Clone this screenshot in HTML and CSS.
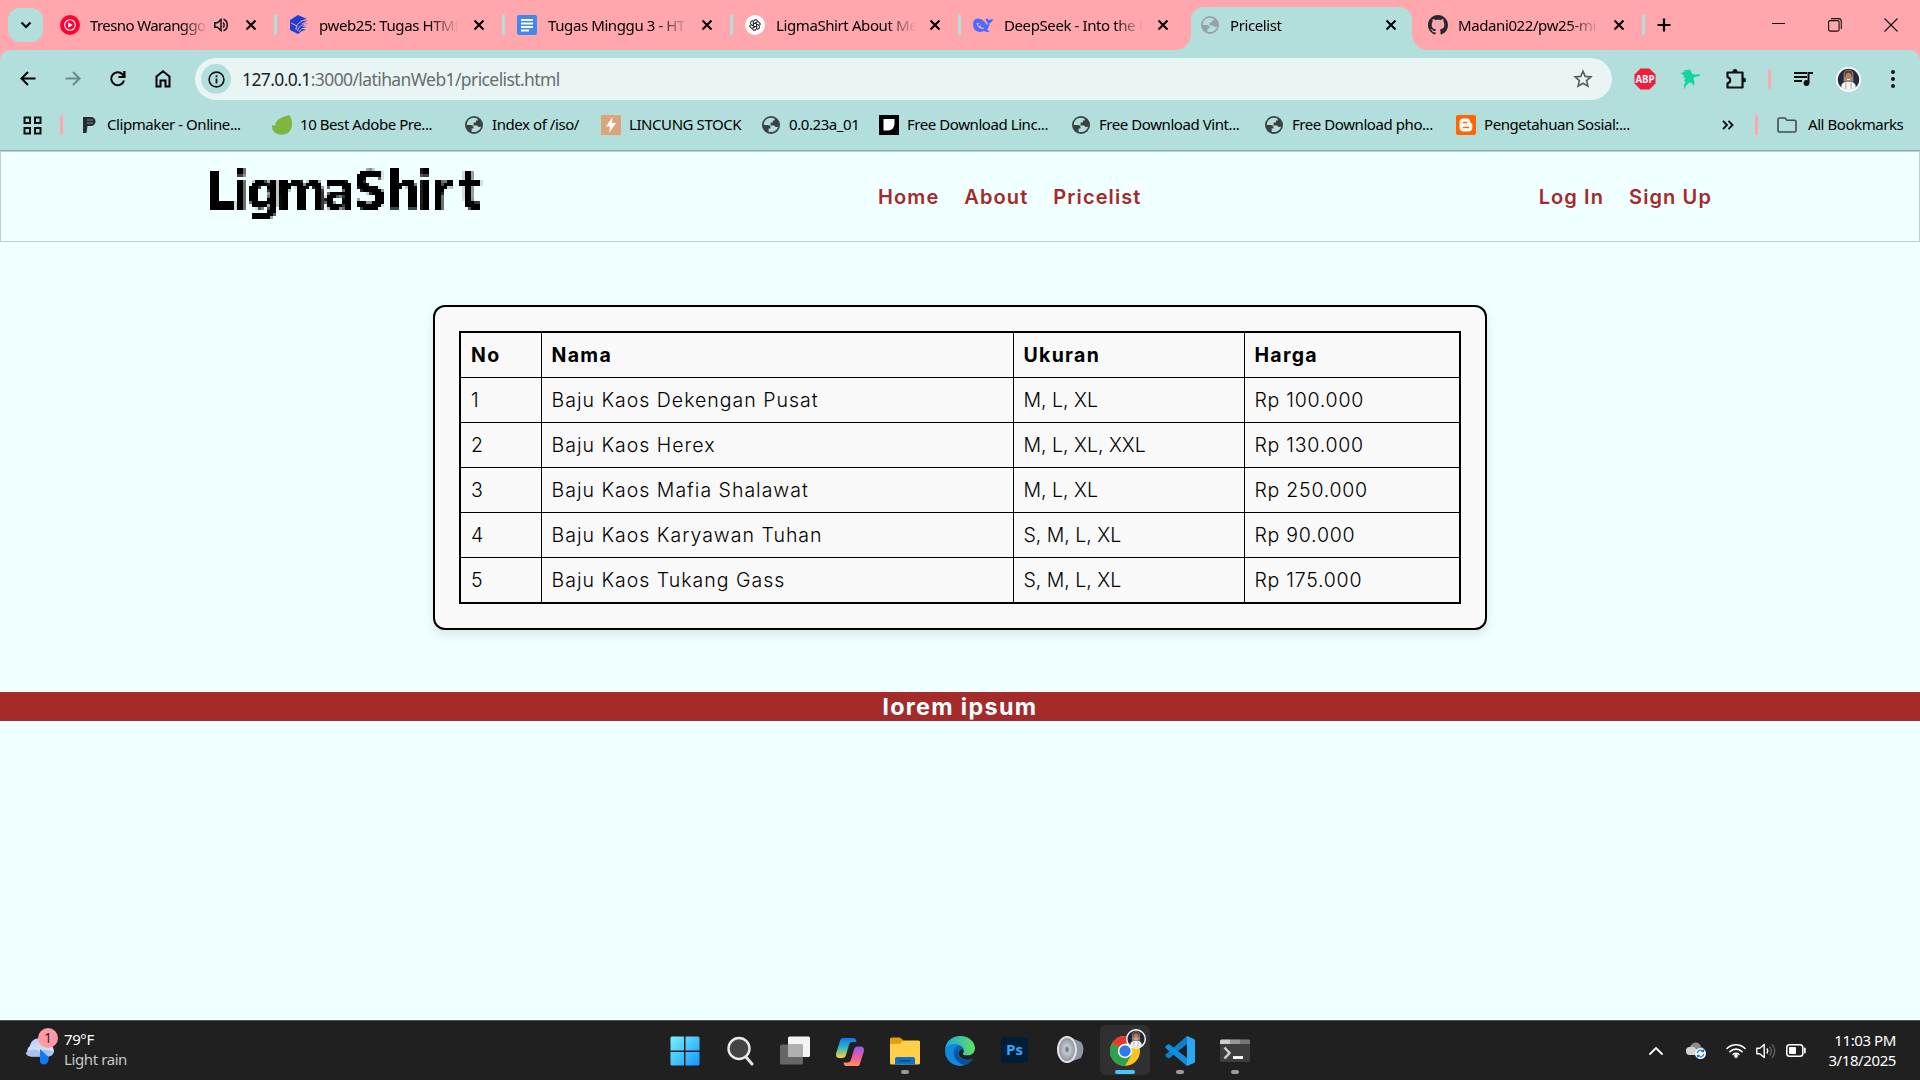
FILE: index.html
```html
<!DOCTYPE html>
<html lang="en">
<head>
<meta charset="utf-8">
<title>Pricelist</title>
<link rel="stylesheet" href="styles.css">
</head>
<body>
<svg class="defs" width="0" height="0">
  <defs>
    <symbol id="close" viewBox="0 0 12 12"><path d="M1.5 1.5l9 9M10.5 1.5l-9 9" stroke="#000" stroke-width="2" fill="none"/></symbol>
    <symbol id="globe" viewBox="0 0 18 18"><circle cx="9" cy="9" r="9" fill="currentColor"/><path class="land" d="M8.5 1.8C4.5 2 1.800 5 1.800 9l4 .1c1.600 0 2.700.8 2.700 2.300v1.100H6.600v3.200c4.200 1.300 8.800-1.300 9.500-5.300-1.500 1-3.300.7-3.800-.9H8.600V6.400h2.300V4.600h1.800V2.700C11.300 2 9.900 1.800 8.500 1.800z"/></symbol>
    <symbol id="avatar" viewBox="0 0 24 24"><circle cx="12" cy="12" r="12" fill="#fff"/><circle cx="12" cy="12" r="10.300" fill="#242b38"/><path d="M5 19.500c0-4 3-5.500 7-5.500s7 1.500 7 5.500c-3.500 4-10.500 4-14 0z" fill="#f4f4f4"/><path d="M7.500 6c1-4.500 8-4.500 9 0l.3 8H7.200z" fill="#8b8f96"/><path d="M8.500 5.500c1-3 6-3 7 0l.3 4H8.200z" fill="#5b3a2d"/><ellipse cx="12" cy="9.800" rx="3" ry="4.400" fill="#bc7d5d"/><path d="M10.500 11.500h3v1h-3z" fill="#fff"/><path d="M9.500 15v6M14.500 15v6" stroke="#888" stroke-width=".7"/></symbol>
    <filter id="mosaic" filterUnits="userSpaceOnUse" x="-6" y="-3" width="285" height="63">
      <feFlood x="-5" y="-2" width="1" height="1" flood-color="#000"/>
      <feComposite x="-6" y="-3" width="3" height="3" operator="over" in2="SourceGraphic" result="dot"/>
      <feFlood x="-5" y="-2" width="1" height="1" flood-color="#000" result="f"/>
      <feOffset in="f" x="-6" y="-3" width="3" height="3"/>
      <feTile/>
      <feComposite in="SourceGraphic" in2="" operator="in" result="a"/>
      <feMorphology in="a" operator="dilate" radius="1"/>
    </filter>
  </defs>
</svg>

<div class="window">
<div class="tabstrip">
  <div class="tabsearch"><svg width="12" height="8" viewBox="0 0 12 8"><path d="M1.500 1.500L6 6l4.500-4.500" fill="none" stroke="#000" stroke-width="2.200"/></svg></div>
  <div class="tabs">
    <div class="tab short">
      <svg class="fav" viewBox="0 0 20 20"><circle cx="10" cy="10" r="10" fill="#ff0033"/><circle cx="10" cy="10" r="5.300" fill="none" stroke="#fff" stroke-width="1.100"/><path d="M8.200 7.300v5.400l4.500-2.700z" fill="#fff"/></svg>
      <span class="title">Tresno Waranggo</span>
      <svg class="sound" width="15" height="14" viewBox="0 0 15 14"><path d="M.8 4.700h2.700L7 1.500v11L3.500 9.300H.8z" fill="none" stroke="#111" stroke-width="1.500"/><path d="M9 4.500c1.500 1 1.500 4 0 5M9.500 1.300c5 1.500 5 9.900 0 11.400" fill="none" stroke="#111" stroke-width="1.500"/></svg>
      <svg class="x"><use href="#close"/></svg>
    </div>
    <div class="tab">
      <svg class="fav" viewBox="0 0 20 20"><path d="M9 0l9 4-7 2 8-.5-7 3.500 7-.5-6 3 5 .5-5.500 1.500 4.500 1.500-4 1-4 3L1 15V5z" fill="#1d3fd8"/><path d="M7 15c0-6 4-9 11-10.500M8.500 16c1-5 4-6.500 10-6.800M10 17c2-3.500 4-4 7-3.500M2 8l6 3" fill="none" stroke="#ffa7ad" stroke-width="1"/></svg>
      <span class="title">pweb25: Tugas HTML</span><svg class="x"><use href="#close"/></svg>
    </div>
    <div class="tab">
      <svg class="fav" viewBox="0 0 20 20"><rect width="20" height="20" rx="2" fill="#4285f4"/><path d="M4 5h12M4 8.500h12M4 12h12M4 15.500h8" stroke="#fff" stroke-width="1.900"/></svg>
      <span class="title">Tugas Minggu 3 - HT</span><svg class="x"><use href="#close"/></svg>
    </div>
    <div class="tab">
      <svg class="fav" viewBox="0 0 20 20"><circle cx="10" cy="10" r="10" fill="#fff"/><g fill="none" stroke="#222" stroke-width="1"><g transform="translate(2 2) scale(.8)"><path id="petal" d="M8 11.200V6.300c0-3 4-3.700 5.200-1.200M8 8.800l4.300-2.500c2.600-1.500 5.100 1.600 3.600 3.900"/><use href="#petal" transform="rotate(60 10 10)"/><use href="#petal" transform="rotate(120 10 10)"/><use href="#petal" transform="rotate(180 10 10)"/><use href="#petal" transform="rotate(240 10 10)"/><use href="#petal" transform="rotate(300 10 10)"/></g></g></svg>
      <span class="title">LigmaShirt About Me</span><svg class="x"><use href="#close"/></svg>
    </div>
    <div class="tab last">
      <svg class="fav" viewBox="0 0 20 20"><path d="M1.500 5C3.500 2.800 6 3.200 8 4.200c1.500.4 1.500 1 2.500 1.800 2 1.500 2.500 3 4 4 .8-1.300.2-2-1-3.500-1-1.500-.8-2.500 0-3.500 1 .3 1.500 1.700 2.500 2 1-.2 2.500-1.200 4-1-.3 2.500-1.500 3.500-3.300 4-.2 3-1.200 5-2.700 6.500l2.500 2c-2 1.200-4 .2-5.500-.5C4 19 0 14.500 0 9.500 0 7.500.5 6 1.500 5z" fill="#4d6bfe"/><path d="M3.500 8c3.500-.5 6.500 3 7.500 6-4 .5-7-2.500-7.500-6z" fill="#ffa7ad"/><path d="M5 9.500c2.500 0 4 1.500 5 3" fill="none" stroke="#4d6bfe" stroke-width="1.500"/></svg>
      <span class="title">DeepSeek - Into the U</span><svg class="x"><use href="#close"/></svg>
    </div>
    <div class="tab active">
      <svg class="fav globe"><use href="#globe"/></svg>
      <span class="title">Pricelist</span><svg class="x"><use href="#close"/></svg>
    </div>
    <div class="tab">
      <svg class="fav" viewBox="0 0 16 16"><path fill="#24292f" d="M8 0C3.580 0 0 3.580 0 8c0 3.540 2.290 6.530 5.470 7.590.4.070.55-.17.55-.38 0-.19-.01-.82-.01-1.490-2.010.37-2.530-.49-2.690-.94-.09-.23-.48-.94-.82-1.130-.28-.15-.68-.52-.01-.53.63-.01 1.080.58 1.230.82.72 1.210 1.870.87 2.330.66.07-.52.28-.87.51-1.070-1.780-.2-3.640-.89-3.640-3.950 0-.87.31-1.590.82-2.150-.08-.2-.36-1.020.08-2.120 0 0 .67-.21 2.200.82.640-.18 1.320-.27 2-.27s1.360.09 2 .27c1.530-1.040 2.200-.82 2.200-.82.440 1.100.160 1.920.080 2.120.510.560.820 1.270.820 2.150 0 3.070-1.870 3.750-3.650 3.950.290.250.540.730.540 1.480 0 1.070-.01 1.930-.01 2.200 0 .21.150.460.550.380A8 8 0 0016 8c0-4.420-3.580-8-8-8z"/></svg>
      <span class="title">Madani022/pw25-mi</span><svg class="x"><use href="#close"/></svg>
    </div>
  </div>
  <svg class="plus" width="14" height="14" viewBox="0 0 14 14"><path d="M7 .5v13M.5 7h13" stroke="#000" stroke-width="2.200"/></svg>
  <div class="winctl">
    <svg width="14" height="14" viewBox="0 0 14 14"><path d="M0 5.500h13" stroke="#111"/></svg>
    <svg width="14" height="14" viewBox="0 0 14 14"><rect x=".6" y="2.600" width="10.500" height="10.500" rx="1.500" fill="none" stroke="#111" stroke-width="1.100"/><path d="M3 .6h7.500a2.800 2.800 0 0 1 2.800 2.800V11" fill="none" stroke="#111" stroke-width="1.100"/></svg>
    <svg width="14" height="14" viewBox="0 0 14 14"><path d="M.5.5l13 13M13.500.5l-13 13" stroke="#111" stroke-width="1.100"/></svg>
  </div>
</div>

<div class="chrome">
  <div class="toolbar">
    <div class="navbtns">
      <svg width="20" height="20" viewBox="0 0 20 20"><path d="M17.500 9.500H4M10 3L3.500 9.500 10 16" fill="none" stroke="#000" stroke-width="2"/></svg>
      <svg width="20" height="20" viewBox="0 0 20 20"><path d="M2.500 9.500H16M10 3l6.500 6.500L10 16" fill="none" stroke="#6d8a8a" stroke-width="2"/></svg>
      <svg width="20" height="20" viewBox="0 0 20 20"><path d="M16 11.500a6.500 6.500 0 1 1-1.600-6.300L17 8" fill="none" stroke="#000" stroke-width="2"/><path d="M17.500 2v7h-7V7h4.700V2z" fill="#000"/></svg>
      <svg width="20" height="20" viewBox="0 0 20 20"><path d="M3.500 7.500L10 2.300l6.500 5.200v10h-4v-6h-5v6h-4z" fill="none" stroke="#000" stroke-width="2"/></svg>
    </div>
    <div class="omnibox">
      <div class="info"><svg width="17" height="17" viewBox="0 0 17 17"><circle cx="8.500" cy="8.500" r="7.400" fill="none" stroke="#111" stroke-width="1.600"/><path d="M8.500 7.500v5M8.500 4.300v1.900" stroke="#111" stroke-width="1.800"/></svg></div>
      <span class="url"><b>127.0.0.1</b>:3000/latihanWeb1/pricelist.html</span>
      <svg width="20" height="20" viewBox="0 0 20 20"><path d="M10 2.200l2.200 5.200 5.700.5-4.300 3.700 1.300 5.500L10 14.200l-4.900 2.900 1.300-5.500L2.100 7.900l5.700-.5z" fill="none" stroke="#555e5e" stroke-width="1.600"/></svg>
    </div>
    <div class="exts">
      <svg width="22" height="22" viewBox="0 0 22 22"><path d="M6.500.5h9l6 6v9l-6 6h-9l-6-6v-9z" fill="#f01e3c"/><text x="11" y="14.800" text-anchor="middle" class="abp" textLength="19" lengthAdjust="spacingAndGlyphs">ABP</text></svg>
      <svg width="20" height="20" viewBox="0 0 20 20"><path d="M0 3.500L3 4 2.500 2.500 5 3 4 1l4 .3L9.500 0l2 3 .5 2 3.500.7L18 5l2 .5-.5 1.500L15 8l-1.500 1c0 2 1 3.500 1 5l-1 3-1.500-3-2.500-.5-3.500 3L5 20.500l-1.300-4.200L5.500 13 4 11.500 5.500 9 3 8.500 4.500 7z" fill="#10d6a0"/></svg>
      <svg width="22" height="22" viewBox="0 0 22 22"><path d="M2.500 4.500h15v15h-15v-4.200c3.600-.8 3.600-5.400 0-6.200z" fill="none" stroke="#111" stroke-width="2.200" stroke-linejoin="round"/><path d="M7.500 4a2.500 3 0 0 1 5 0zM18 9.500a3 2.500 0 0 1 0 5z" fill="#111"/></svg>
      <i class="vsep"></i>
      <svg width="20" height="16" viewBox="0 0 20 16"><path d="M0 2h13M0 6h13M0 10h8" stroke="#111" stroke-width="1.900"/><path d="M14.500 12V2H19" stroke="#111" stroke-width="2" fill="none"/><circle cx="12.500" cy="12" r="2.900" fill="#111"/></svg>
      <svg width="25" height="25"><use href="#avatar"/></svg>
      <svg width="6" height="20" viewBox="0 0 6 20"><g fill="#111"><circle cx="3" cy="3" r="2"/><circle cx="3" cy="10" r="2"/><circle cx="3" cy="17" r="2"/></g></svg>
    </div>
  </div>
  <div class="bookmarks">
    <svg class="apps" width="19" height="19" viewBox="0 0 19 19"><g fill="none" stroke="#111" stroke-width="2"><path d="M1.500 1.500h5.500v5.500H1.500zM12 1.500h5.500v5.500H12zM1.500 12h5.500v5.500H1.500zM12 12h5.500v5.500H12z"/></g></svg>
    <i class="vsep"></i>
    <div class="bm b1"><svg viewBox="0 0 20 20"><path d="M4 2h8a4.500 4.500 0 0 1 0 9H8.500l-1 7H4z" fill="#262b2c"/><path d="M8 5h6M8 8h6" stroke="#789" stroke-width="1"/></svg><span>Clipmaker - Online...</span></div>
    <div class="bm b2"><svg viewBox="0 0 20 20"><path d="M17 0c3.500 3 5 13-1 18C9 22 0 18.500 0 11.500 0 10 1.500 9.500 3 11 3.500 3.500 11 2 17 0z" fill="#82b440"/></svg><span>10 Best Adobe Pre...</span></div>
    <div class="bm b3"><svg class="g"><use href="#globe"/></svg><span>Index of /iso/</span></div>
    <div class="bm b4"><svg viewBox="0 0 20 20"><path d="M0 0h20v20H0z" fill="#dba57b"/><path d="M11.500 2L5 11.500h4L8 18l7-10h-4z" fill="#fff"/></svg><span>LINCUNG STOCK</span></div>
    <div class="bm b5"><svg class="g"><use href="#globe"/></svg><span>0.0.23a_01</span></div>
    <div class="bm b6"><svg viewBox="0 0 20 20"><path d="M0 0h20v20H0z"/><path d="M4.500 4h11v4c0 5-3 7.500-7 7.500h-4z" fill="#fff"/></svg><span>Free Download Linc...</span></div>
    <div class="bm b7"><svg class="g"><use href="#globe"/></svg><span>Free Download Vint...</span></div>
    <div class="bm b8"><svg class="g"><use href="#globe"/></svg><span>Free Download pho...</span></div>
    <div class="bm b9"><svg viewBox="0 0 20 20"><rect width="20" height="20" rx="2" fill="#ff6500"/><path d="M7.500 3.500h3.500c2 0 3.300 1.500 3.300 3.500 0 1.300.5 1.500 2 1.700v3.800c0 2.500-1.500 4-4 4H7.500c-2.500 0-4-1.500-4-4v-5c0-2.500 1.500-4 4-4z" fill="#fff"/><path d="M7.500 7.500h3M7.500 12.500h5" stroke="#ff6500" stroke-width="1.700" stroke-linecap="round"/></svg><span>Pengetahuan Sosial:...</span></div>
    <svg class="more" width="12" height="10" viewBox="0 0 12 10"><path d="M1 .8L5 5 1 9.200M6.500.8l4 4.200-4 4.200" fill="none" stroke="#111" stroke-width="1.900"/></svg>
    <i class="vsep"></i>
    <svg class="folder" width="20" height="16" viewBox="0 0 20 16"><path d="M1 2.500C1 1.500 1.500 1 2.500 1H8l2 2.200h7.500c1 0 1.500.5 1.500 1.500v8.800c0 1-.5 1.500-1.500 1.500h-15C1.500 15 1 14.500 1 13.500z" fill="none" stroke="#444c4c" stroke-width="1.600"/></svg>
    <span>All Bookmarks</span>
  </div>
</div>
</div>

<header class="site">
  <svg class="logo" width="274" height="60" viewBox="0 0 274 60" role="img">
    <defs>
      <filter id="pixels" filterUnits="userSpaceOnUse" x="-6" y="-3" width="285" height="63">
        <feFlood x="-5" y="-2" width="1" height="1" flood-color="#000"/>
        <feOffset x="-6" y="-3" width="3" height="3"/>
        <feTile result="grid"/>
        <feComposite in="SourceGraphic" in2="grid" operator="in"/>
        <feMorphology operator="dilate" radius="1"/>
      </filter>
    </defs>
    <text y="41" filter="url(#pixels)" x="-4.500 22 36.500 66 113 143 176 207 220 249">LigmaShirt</text>
  </svg>
  <nav class="menu"><a>Home</a><a>About</a><a>Pricelist</a></nav>
  <nav class="account"><a>Log In</a><a>Sign Up</a></nav>
</header>

<main>
  <div class="card">
    <table>
      <colgroup><col class="c1"><col class="c2"><col class="c3"><col class="c4"></colgroup>
      <tr><th>No</th><th>Nama</th><th>Ukuran</th><th>Harga</th></tr>
      <tr><td>1</td><td>Baju Kaos Dekengan Pusat</td><td>M, L, XL</td><td>Rp 100.000</td></tr>
      <tr><td>2</td><td>Baju Kaos Herex</td><td>M, L, XL, XXL</td><td>Rp 130.000</td></tr>
      <tr><td>3</td><td>Baju Kaos Mafia Shalawat</td><td>M, L, XL</td><td>Rp 250.000</td></tr>
      <tr><td>4</td><td>Baju Kaos Karyawan Tuhan</td><td>S, M, L, XL</td><td>Rp 90.000</td></tr>
      <tr><td>5</td><td>Baju Kaos Tukang Gass</td><td>S, M, L, XL</td><td>Rp 175.000</td></tr>
    </table>
  </div>
</main>
<footer>lorem ipsum</footer>

<div class="taskbar">
  <div class="weather">
    <svg width="36" height="40" viewBox="0 0 36 40"><defs><linearGradient id="cl" x2="0" y2="1"><stop stop-color="#b9d0f5"/><stop offset="1" stop-color="#dfe9fa"/></linearGradient></defs><path d="M7 28.500a6 6 0 0 1-1-10.500c1-9 14-11 17-2 8 0 10 12 1 12.500z" fill="url(#cl)"/><path d="M1.500 25c5-5 12-4 14-1.500 4-3 10-2 14 .5-1 3.500-4 4.500-6 4.500H7c-3 0-4-1-5.500-3.500z" fill="#a9c3f0"/><path d="M16 21l8 7.500c2 3-.5 8-4 8s-4.500-3-4-5z" fill="#0f7bf2"/><circle cx="24" cy="10" r="10" fill="#ff99a4"/><text x="24" y="15" text-anchor="middle" class="badge">1</text></svg>
    <div class="wtext"><span>79°F</span><span class="dim">Light rain</span></div>
  </div>
  <div class="apps-row">
    <div class="app"><svg viewBox="0 0 30 30"><defs><linearGradient id="w" x2="1" y2="1"><stop stop-color="#7df0ff"/><stop offset="1" stop-color="#1097ff"/></linearGradient></defs><path d="M2 .5h12v14H.5V2Q.5.5 2 .5zM15.500.5H28q1.500 0 1.500 1.500v12.500h-14zM.5 16H14v13.500H2Q.5 29.500.5 28zM15.500 16h14v12q0 1.500-1.500 1.500H15.500z" fill="url(#w)"/></svg></div>
    <div class="app"><svg viewBox="0 0 30 30"><circle cx="14" cy="12.500" r="10.500" fill="#444" stroke="#e8eaec" stroke-width="2.400"/><path d="M21 21l6 7" stroke="#e0e3e6" stroke-width="3" stroke-linecap="round"/></svg></div>
    <div class="app"><svg viewBox="0 0 30 30"><rect x="8" y=".5" width="22" height="20.500" rx="1.500" fill="#f4f4f4"/><rect x="0" y="8.500" width="23" height="20" rx="1.500" fill="#666"/><path d="M8 8.500h15V21H8z" fill="#b0b0b0"/></svg></div>
    <div class="app"><svg viewBox="0 0 30 30"><defs><linearGradient id="ca" x2="0" y2="1"><stop stop-color="#1d6ff2"/><stop offset=".45" stop-color="#25b6c8"/><stop offset="1" stop-color="#ffd23c"/></linearGradient><linearGradient id="cb" x2="0" y2="1"><stop stop-color="#8d5cf6"/><stop offset=".55" stop-color="#f25b9a"/><stop offset="1" stop-color="#ff9a55"/></linearGradient></defs><path d="M8 2h10c2.500 0 3 2 3.500 4h-4c-2 0-3 1-3.500 3l-3 10c-.7 2-1.500 3-4 3H4C1 22 .5 19 1.500 16L5 5c.6-2 1.500-3 3-3z" fill="url(#ca)"/><path d="M22 30.500H12c-2.500 0-3-2-3.500-4h4c2 0 3-1 3.500-3l3-10c.7-2 1.500-3 4-3h3c3 0 3.500 3 2.500 6L25 27.500c-.6 2-1.500 3-3 3z" fill="url(#cb)"/></svg></div>
    <div class="app run"><svg viewBox="0 0 30 30"><path d="M0 3q0-1.500 1.500-1.500H10L13 4v6H0z" fill="#e0a009"/><path d="M0 8l10-.2L13 4.500h15.500Q30 4.500 30 6v21q0 1.500-1.500 1.500h-27Q0 28.500 0 27z" fill="#ffcf48"/><path d="M5 28.500V23q0-2 2-2h16q2 0 2 2v5.500z" fill="#0f72c8"/><path d="M9.500 24.800h11" stroke="#064b8a" stroke-width="1.500"/></svg></div>
    <div class="app"><svg viewBox="0 0 30 30"><defs><linearGradient id="ed" x2="1"><stop stop-color="#1aa9e8"/><stop offset="1" stop-color="#62e05a"/></linearGradient></defs><circle cx="15" cy="15" r="15" fill="#0c63b8"/><path d="M.3 13C1 5 7.500 0 15 0c8.500 0 15 5.500 15 12.500 0 4.500-3.500 7-7.500 7-3 0-5-.8-4.800-2 .1-.7 1-1.300 1-3.500C18.700 8 5 6 .3 13z" fill="url(#ed)"/><path d="M.3 13C3 8 10 7 14 9c-5 1.500-7 7-4.500 12 2 4 6 7 10.500 8A15 15 0 0 1 .3 13z" fill="#1488d8"/><path d="M13.500 12c-4 5 1 13 8 12.500 3 0 5-1.500 6-2-1.500 3-4 5-7 6.500C11 28 7 18 13.500 12z" fill="#0a4f9c"/><path d="M17.700 17.500c-.2 1.200 1.800 2 4.800 2 4.500 0 7.500-3 7.500-7l.5 8-2.800 2c-7 3-13 0-14-5 0-2 1.500-4 3.500-4.500 1.500 1 2.200 3 .5 4.500z" fill="#202020"/></svg></div>
    <div class="app"><svg viewBox="0 0 30 30"><rect x="1" y="1" width="27" height="26" rx="4" fill="#001e36"/><text x="14.500" y="19" text-anchor="middle" class="ps">Ps</text></svg></div>
    <div class="app"><svg viewBox="0 0 30 30"><defs><radialGradient id="sp"><stop stop-color="#555d66"/><stop offset=".35" stop-color="#c4cad2"/><stop offset="1" stop-color="#8e959f"/></radialGradient></defs><path d="M12 0l14 6q5 6 0 16l-14 5z" fill="#8f97a5"/><ellipse cx="12" cy="13.500" rx="10" ry="13.500" fill="#e3e6ea"/><ellipse cx="12" cy="13.500" rx="8" ry="11.500" fill="url(#sp)"/></svg></div>
    <div class="app run current"><svg viewBox="0 0 30 30"><circle cx="15" cy="15" r="15" fill="#fcc31e"/><path d="M15 15L2 7.500A15 15 0 0 1 28 7.500H15z" fill="#e33b2e"/><path d="M2 7.500A15 15 0 0 0 15 30l6.500-11.200L15 15z" fill="#2da14c"/><circle cx="15" cy="15" r="7.200" fill="#fff"/><circle cx="15" cy="15" r="5.700" fill="#2f7bea"/></svg><svg class="mini"><use href="#avatar"/></svg></div>
    <div class="app run"><svg viewBox="0 0 30 30"><path d="M22 0l7 3q1 .5 1 1.500v21q0 1-1 1.500l-7 3z" fill="#2aa7f2"/><path d="M22 0v8L4 22.500l-3.500-2v-2z" fill="#0f7fcb"/><path d="M22 30v-8L4 8 .5 10v2z" fill="#138ddb"/></svg></div>
    <div class="app run"><svg viewBox="0 0 30 30"><rect y="3.500" width="30" height="22.500" rx="1.500" fill="#3e3e3e"/><path d="M0 8V5q0-1.500 1.500-1.500H10V8z" fill="#ccc"/><path d="M10 3.500h10V8H10z" fill="#999"/><path d="M20 3.500h8.500Q30 3.500 30 5v3H20z" fill="#777"/><path d="M4.500 11.500l5 5.500-5 5.500" fill="none" stroke="#ccc" stroke-width="2.600"/><path d="M13 21.500h10" stroke="#fff" stroke-width="2.800"/></svg></div>
  </div>
  <div class="tray">
    <svg width="14" height="8" viewBox="0 0 14 8"><path d="M1 7l6-6 6 6" fill="none" stroke="#fff" stroke-width="1.800" stroke-linecap="round"/></svg>
    <svg width="20" height="17" viewBox="0 0 20 17"><path d="M4 13a4 4 0 0 1 0-8c2-6 10-6 11 0 4 0 5 7 1 8z" fill="#8c8c8c"/><path d="M4 13a4 4 0 0 1 0-8c5-1 7 2 8 8z" fill="#d2d2d2"/><circle cx="14.500" cy="11.500" r="5.500" fill="#fff"/><path d="M11.300 11a3.300 3.300 0 0 1 6-1.500M17.700 12a3.300 3.300 0 0 1-6 1.500M17.500 7.500v2.200h-2.200M11.500 15.500v-2.200h2.200" fill="none" stroke="#1177d1" stroke-width="1.300"/></svg>
    <svg width="20" height="15" viewBox="0 0 20 15"><g fill="none" stroke="#fff" stroke-width="1.600" stroke-linecap="round"><path d="M1 5.500a12.700 12.700 0 0 1 18 0M4 8.600a8.500 8.500 0 0 1 12 0M7 11.500a4.300 4.300 0 0 1 6 0"/></g><circle cx="10" cy="13" r="1.900" fill="#fff"/></svg>
    <svg width="20" height="16" viewBox="0 0 20 16"><path d="M.8 5.200h3L8.200 1.500v13L3.800 10.800h-3z" fill="none" stroke="#fff" stroke-width="1.400" stroke-linejoin="round"/><path d="M10.800 5.500q2 2.500 0 5" fill="none" stroke="#fff" stroke-width="1.300"/><path d="M13.500 3.500q4 4.500 0 9M16 1.200q5.500 6.800 0 13.600" fill="none" stroke="#666" stroke-width="1.300"/></svg>
    <svg width="20" height="13" viewBox="0 0 20 13"><rect x=".8" y=".8" width="16" height="11.400" rx="2.800" fill="none" stroke="#fff" stroke-width="1.500"/><rect x="3" y="3" width="7" height="7" rx="1" fill="#fff"/><path d="M18.800 4.500v4" stroke="#fff" stroke-width="1.800" stroke-linecap="round"/></svg>
    <div class="clock"><span>11:03 PM</span><span>3/18/2025</span></div>
  </div>
</div>
</body>
</html>
```
FILE: styles.css
```css
* { box-sizing: border-box; }
html, body { height: 100%; }
body {
  margin: 0;
  display: flex;
  flex-direction: column;
  overflow: hidden;
  background: #f0ffff;
  color: #000;
  font-family: "Noto Sans", "Open Sans", sans-serif;
  font-size: 15px;
}
svg { display: block; flex: none; }
.defs { position: absolute; }
.land { fill: #b2dfdc; }
.window { flex: none; background: #ffa7ad; white-space: nowrap; }

/* tab strip */
.tabstrip {
  display: flex;
  align-items: center;
  height: 50px;
  padding-left: 8px;
}
.tabsearch {
  width: 35px;
  height: 34px;
  border-radius: 12px;
  background: #b2dfdc;
  display: grid;
  place-items: center;
}
.tabs { display: flex; margin-left: 4px; align-self: stretch; }
.tab {
  position: relative;
  width: 228px;
  display: flex;
  align-items: center;
  padding: 0 18px 0 13px;
  letter-spacing: -.4px;
}
.tab::after {
  content: "";
  position: absolute;
  right: -2px;
  top: 14px;
  width: 3px;
  height: 21px;
  border-radius: 2px;
  background: #b2dfdc;
}
.tab.last::after { display: none; }
.fav { width: 20px; height: 20px; margin-right: 10px; }
.fav.globe { width: 18px; height: 18px; margin: 0 11px 0 1px; color: #98a0a4; }
.title {
  width: 141px;
  -webkit-mask-image: linear-gradient(90deg, #000 78%, transparent);
  mask-image: linear-gradient(90deg, #000 78%, transparent);
}
.tab:nth-child(n+2):nth-child(-n+5) { padding-left: 14px; }
.tab:nth-child(3) .fav, .tab:nth-child(4) .fav, .tab:nth-child(5) .fav { margin-right: 11px; }
.tab:nth-child(n+2):nth-child(-n+5) .title { width: 140px; }
.short .title { width: 118px; letter-spacing: -.6px; }
.sound { margin-left: 6px; }
.x { width: 12px; height: 12px; margin-left: auto; }
.active > * { position: relative; z-index: 1; }
.tab.active::before {
  content: "";
  position: absolute;
  left: 4px;
  right: 3px;
  top: 7px;
  bottom: 0;
  border-radius: 13px 13px 0 0;
  background: #b2dfdc;
}
.tab.active::after {
  left: -11px;
  right: -12px;
  top: 35px;
  width: auto;
  height: 15px;
  border-radius: 0;
  background:
    radial-gradient(circle at 0 0, transparent 14.500px, #b2dfdc 15px) left / 15px 15px no-repeat,
    radial-gradient(circle at 100% 0, transparent 14.500px, #b2dfdc 15px) right / 15px 15px no-repeat;
}
.plus { margin-left: 14px; }
.winctl { display: flex; gap: 42px; margin-left: auto; padding-right: 22px; }

/* toolbar and bookmarks */
.chrome {
  height: 101px;
  background: #b2dfdc;
  border-bottom: 1px solid #8cadab;
  border-radius: 10px 10px 0 0;
}
.toolbar { display: flex; align-items: center; height: 58px; padding-left: 18px; }
.navbtns { display: flex; gap: 25px; }
.omnibox {
  display: flex;
  align-items: center;
  width: 1417px;
  height: 42px;
  margin-left: 22px;
  padding: 0 19px 0 6px;
  border-radius: 21px;
  background: #e9f5f5;
}
.info { width: 30px; height: 30px; border-radius: 50%; background: #b2dfdc; display: grid; place-items: center; }
.url { flex: 1; margin-left: 11px; font-size: 17.500px; letter-spacing: -.600px; color: #666d6d; }
.url b { font-weight: 400; color: #222; }
.exts { display: flex; align-items: center; margin-left: 22px; }
.exts svg:nth-child(2) { margin-left: 24px; }
.exts svg:nth-child(3) { margin-left: 25px; }
.exts .vsep { margin-left: 21px; }
.exts svg:nth-child(5) { margin-left: 23px; }
.exts svg:nth-child(6) { margin-left: 22px; }
.exts svg:nth-child(7) { margin-left: 29px; }
.abp { font: bold 10px "Open Sans", sans-serif; fill: #fff; }
.vsep { width: 3px; height: 20px; border-radius: 2px; background: #ffa7ad; }
.bookmarks { display: flex; align-items: center; height: 34px; padding-left: 23px; letter-spacing: -.430px; }
.bookmarks .vsep { margin-left: 18px; }
.bookmarks span { padding-bottom: 2px; }
.bm { display: flex; align-items: center; gap: 8px; }
.bm svg { width: 20px; height: 20px; }
.bm .g { width: 18px; height: 18px; margin: 0 1px; color: #3c4043; }
.b1 { width: 193px; margin-left: 16px; }
.b2 { width: 192px; }
.b3 { width: 137px; }
.b4 { width: 160px; }
.b5 { width: 118px; }
.b6 { width: 192px; }
.b7 { width: 193px; }
.b8 { width: 192px; }
.b9 { width: 266px; }
.bookmarks .more + .vsep { margin-left: 21px; }
.folder { margin: 0 11px 0 19px; }

/* site header */
.site {
  flex: none;
  height: 91px;
  border: 1px solid #c5cccc;
  display: flex;
  align-items: center;
  padding: 0 207px 0 209px;
  font-family: Inter, "Open Sans", sans-serif;
  font-size: 20px;
  font-weight: 600;
  letter-spacing: 1.100px;
  color: #a52a2a;
}
.logo { align-self: flex-start; margin-top: 16px; overflow: visible; }
.logo text { font: bold 54px "DejaVu Sans Condensed", "DejaVu Sans", sans-serif; fill: #000; letter-spacing: 0; }
.menu, .account { display: flex; gap: 25px; }
.menu { margin-left: 394px; }
.account { margin-left: auto; }

/* price table */
main { flex: none; height: 450px; padding-top: 63px; display: flex; justify-content: center; align-items: flex-start; }
.card {
  width: 1054px;
  height: 325px;
  padding: 24px;
  border: 2px solid #000;
  border-radius: 12px;
  background: #f9f9f9;
  box-shadow: 0 5px 12px rgba(0, 0, 0, .1);
}
table {
  width: 1002px;
  height: 273px;
  table-layout: fixed;
  border-collapse: collapse;
  border: 2px solid #000;
  font-family: Inter, "Open Sans", sans-serif;
  font-size: 19.500px;
}
.c1 { width: 81px; }
.c2 { width: 472px; }
.c3 { width: 231px; }
td, th { border: 1px solid #000; padding: 0 10px; text-align: left; height: 45px; font-weight: 300; white-space: nowrap; }
td:nth-child(2) { letter-spacing: 1px; }
td:nth-child(4) { letter-spacing: .750px; }
th { font-weight: 700; letter-spacing: 1.300px; }

footer {
  flex: none;
  height: 29px;
  background: #a52a2a;
  color: #f0ffff;
  text-align: center;
  font: 700 23.400px/29px Inter, sans-serif;
  letter-spacing: 1.300px;
}

/* taskbar */
.taskbar {
  flex: none;
  display: flex;
  height: 60px;
  margin-top: auto;
  background: #202020;
  border-top: 1px solid #4b5252;
  color: #fff;
  white-space: nowrap;
}
.weather { display: flex; width: 657px; padding: 7px 0 0 24px; }
.wtext, .clock { display: flex; flex-direction: column; line-height: 20px; letter-spacing: -.4px; }
.wtext { padding-top: 1px; margin-left: 4px; }
.dim { color: #c8c8c8; }
.badge { font: 14px "Open Sans", sans-serif; fill: #222; }
.apps-row { display: flex; padding-top: 4px; }
.app { position: relative; width: 50px; height: 50px; margin: 0 2.550px; padding: 11px 10px 9px; border-radius: 6px; }
.app svg { width: 30px; height: 30px; }
.run::after {
  content: "";
  position: absolute;
  left: 21px;
  bottom: 1px;
  width: 8px;
  height: 4px;
  border-radius: 2px;
  background: #9a9a9a;
}
.current { background: #303030; }
.current::after { left: 15px; width: 20px; background: #4cc2ff; }
.app .mini { position: absolute; left: 26px; top: 4px; width: 20px; height: 20px; }
.ps { font: bold 15px "Open Sans", sans-serif; fill: #31a8ff; }
.tray { display: flex; align-items: center; margin-left: auto; padding-right: 24px; }
.tray svg:nth-child(2) { margin-left: 23px; }
.tray svg:nth-child(3) { margin-left: 20px; }
.tray svg:nth-child(4), .tray svg:nth-child(5) { margin-left: 10px; }
.clock { width: 90px; text-align: right; padding-bottom: 2px; }
```
